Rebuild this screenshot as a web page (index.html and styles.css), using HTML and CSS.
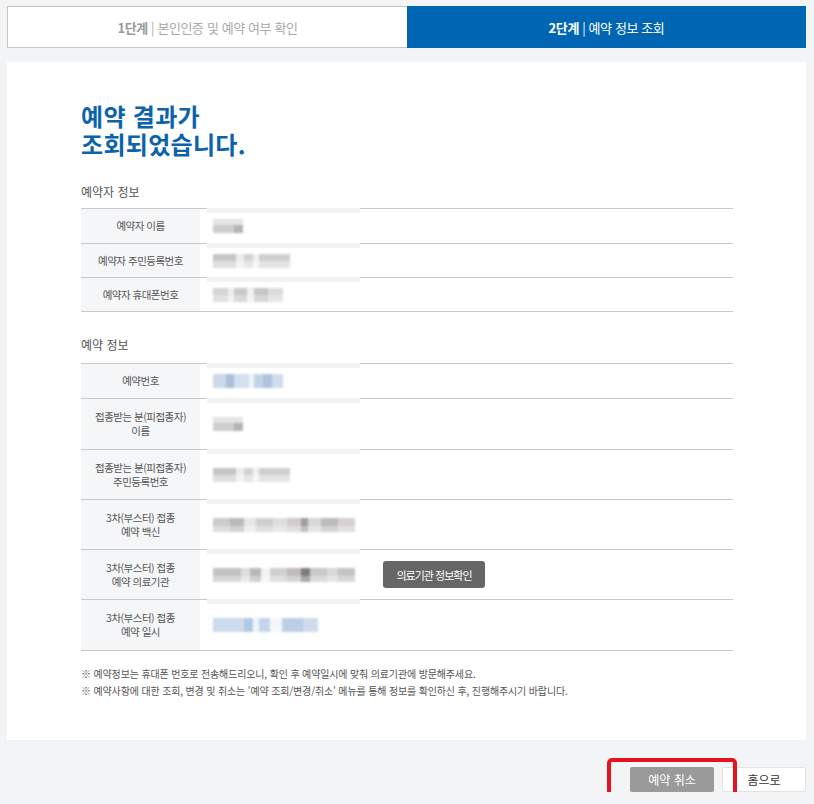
FILE: index.html
```html
<!DOCTYPE html>
<html lang="ko">
<head>
<meta charset="utf-8">
<title>예약 정보 조회</title>
<link rel="stylesheet" href="styles.css">
</head>
<body>
<div class="page">
  <div class="steps">
    <div class="step"><b>1단계</b>&nbsp;|&nbsp;본인인증 및 예약 여부 확인</div>
    <div class="step active"><b>2단계</b>&nbsp;|&nbsp;예약 정보 조회</div>
  </div>

  <div class="card">
    <h1 class="title">예약 결과가<br>조회되었습니다.</h1>

    <h2 class="sec">예약자 정보</h2>
    <div class="grid">
      <div class="row r34">
        <div class="label">예약자 이름</div>
        <div class="value"><span class="blur b-name"></span></div>
      </div>
      <div class="row r33">
        <div class="label">예약자 주민등록번호</div>
        <div class="value"><span class="blur b-rrn"></span></div>
      </div>
      <div class="row r33">
        <div class="label">예약자 휴대폰번호</div>
        <div class="value"><span class="blur b-phone"></span></div>
      </div>
    </div>

    <h2 class="sec sec2">예약 정보</h2>
    <div class="grid">
      <div class="row r34">
        <div class="label">예약번호</div>
        <div class="value"><span class="blur b-resno"></span></div>
      </div>
      <div class="row r50">
        <div class="label">접종받는 분(피접종자)<br>이름</div>
        <div class="value"><span class="blur b-name"></span></div>
      </div>
      <div class="row r49">
        <div class="label">접종받는 분(피접종자)<br>주민등록번호</div>
        <div class="value"><span class="blur b-rrn"></span></div>
      </div>
      <div class="row r49">
        <div class="label">3차(부스터) 접종<br>예약 백신</div>
        <div class="value"><span class="blur b-vac"></span></div>
      </div>
      <div class="row r49">
        <div class="label">3차(부스터) 접종<br>예약 의료기관</div>
        <div class="value"><span class="blur b-hosp"></span><button class="btn-info" type="button">의료기관 정보확인</button></div>
      </div>
      <div class="row r50">
        <div class="label">3차(부스터) 접종<br>예약 일시</div>
        <div class="value"><span class="blur b-date"></span></div>
      </div>
    </div>

    <ul class="notes">
      <li>※ 예약정보는 휴대폰 번호로 전송해드리오니, 확인 후 예약일시에 맞춰 의료기관에 방문해주세요.</li>
      <li>※ 예약사항에 대한 조회, 변경 및 취소는 '예약 조회/변경/취소' 메뉴를 통해 정보를 확인하신 후, 진행해주시기 바랍니다.</li>
    </ul>
  </div>

  <div class="actions">
    <div class="focus"><button class="btn-cancel" type="button">예약 취소</button></div>
    <button class="btn-home" type="button">홈으로</button>
  </div>
</div>
</body>
</html>
```

FILE: styles.css
```css
* { box-sizing: border-box; }

body {
  margin: 0;
  background: #f3f4f6;
  font-family: "Noto Sans CJK KR", "Noto Sans", sans-serif;
  color: #444;
}

.page {
  padding: 6px 8px 0 7px;
}

/* steps */
.steps {
  display: flex;
  height: 42px;
}
.step {
  flex: 1;
  display: flex;
  align-items: center;
  justify-content: center;
  background: #fff;
  border: 1px solid #c6c6c6;
  border-right: none;
  color: #a8a8a8;
  font-size: 13px;
  letter-spacing: -0.4px;
}
.step b { font-weight: 700; color: #999; }
.step.active {
  background: #0066b3;
  border: none;
  color: #fff;
}
.step.active b { color: #fff; }

/* card */
.card {
  margin-top: 14px;
  background: #fff;
  padding: 40px 73px 41px 74px;
}
.title {
  margin: 0;
  font-size: 24px;
  line-height: 28px;
  font-weight: 700;
  color: #0b62ad;
  letter-spacing: 0.3px;
}
.sec {
  margin: 26px 0 8px;
  font-size: 12px;
  line-height: 16px;
  font-weight: 400;
  color: #555;
}
.sec.sec2 { margin: 25px 0 10px; }

/* info grid */
.grid {
  border-top: 1px solid #c8c8c8;
}
.row {
  display: flex;
  border-bottom: 1px solid #c8c8c8;
}
.r34 { height: 35px; }
.r33 { height: 34px; }
.r50 { height: 51px; }
.r49 { height: 50px; }

.label {
  width: 119px;
  flex: none;
  background: #f5f6f8;
  display: flex;
  align-items: center;
  justify-content: center;
  text-align: center;
  font-size: 10.5px;
  line-height: 14px;
  color: #555;
  letter-spacing: -0.5px;
}
.value {
  position: relative;
  flex: 1;
  display: flex;
  align-items: center;
  padding-left: 13px;
}
.value::before {
  content: "";
  position: absolute;
  left: 7px;
  top: -1px;
  width: 153px;
  height: 5px;
  background: #f3f3f3;
}

/* blurred personal data */
.blur {
  display: inline-block;
  height: 14px;
  filter: blur(1.3px);
  flex: none;
}
.b-name {
  width: 30px;
  background:
    linear-gradient(to bottom, #e4e4e4 0 45%, transparent 45%),
    linear-gradient(to right, #cdcdcd 0 70%, #b4b4b4 70%);
}
.b-rrn {
  width: 77px;
  background:
    linear-gradient(to bottom, transparent 0 50%, rgba(255,255,255,0.45) 50%),
    linear-gradient(to right, #c6c6c6 0 30%, #ececec 30% 40%, #d2d2d2 40% 52%, #f1f1f1 52% 60%, #cfcfcf 60% 100%);
}
.b-phone {
  width: 70px;
  background:
    linear-gradient(to bottom, transparent 0 50%, rgba(255,255,255,0.3) 50%),
    linear-gradient(to right, #d4d4d4 0 22%, #ededed 22% 30%, #c9c9c9 30% 48%, #efefef 48% 58%, #c6c6c6 58% 78%, #dcdcdc 78% 100%);
}
.b-resno {
  width: 70px;
  background:
    linear-gradient(to right, #cbd9ea 0 18%, #a9bfdc 18% 30%, #d3dfee 30% 52%, #f0f4f9 52% 58%, #c3d4e9 58% 72%, #aec4df 72% 84%, #d0ddec 84% 100%);
}
.b-vac {
  width: 142px;
  background:
    linear-gradient(to bottom, transparent 0 55%, rgba(255,255,255,0.35) 55%),
    linear-gradient(to right, #cbcbcb 0 12%, #b9b9b9 12% 22%, #e6e6e6 22% 30%, #cfcfcf 30% 42%, #dedede 42% 52%, #d2cccc 52% 62%, #9f9f9f 62% 67%, #d8d8d8 67% 76%, #bcbcbc 76% 88%, #d6d0d0 88% 100%);
}
.b-hosp {
  width: 142px;
  background:
    linear-gradient(to bottom, transparent 0 55%, rgba(255,255,255,0.35) 55%),
    linear-gradient(to right, #c2c2c2 0 20%, #dedede 20% 26%, #b9b9b9 26% 34%, #f2f2f2 34% 40%, #d0d0d0 40% 52%, #c0bbbb 52% 62%, #7c7c7c 62% 68%, #c9c9c9 68% 80%, #d8d8d8 80% 88%, #c4c4c4 88% 100%);
}
.b-date {
  width: 105px;
  background:
    linear-gradient(to right, #ccdbee 0 30%, #b3c8e3 30% 38%, #eef3f9 38% 44%, #c4d5ea 44% 54%, #f5f8fb 54% 66%, #bccfe7 66% 86%, #cddbec 86% 100%);
}

.btn-info {
  margin-left: 28px;
  width: 102px;
  height: 27px;
  border: none;
  border-radius: 3px;
  background: #666;
  color: #fff;
  font-family: inherit;
  font-size: 11px;
  letter-spacing: -1px;
  padding: 0;
}

/* notes */
.notes {
  list-style: none;
  margin: 14px 0 0;
  padding: 0;
  font-size: 10px;
  line-height: 17px;
  color: #555;
  letter-spacing: -0.15px;
}

/* actions */
.actions {
  display: flex;
  justify-content: flex-end;
  align-items: flex-start;
  gap: 8px;
  margin-top: 27px;
}
.focus {
  position: relative;
  height: 25px;
}
.focus::after {
  content: "";
  position: absolute;
  top: -9px;
  bottom: -8px;
  left: -23px;
  right: -23px;
  border: 4px solid #e3141f;
  border-radius: 5px;
  pointer-events: none;
}
.btn-cancel,
.btn-home {
  display: block;
  margin: 0;
  width: 84px;
  height: 25px;
  padding: 0;
  font-family: inherit;
  font-size: 12px;
  border-radius: 2px;
}
.btn-cancel {
  border: none;
  background: #9a9a9a;
  color: #fff;
}
.btn-home {
  border: 1px solid #e2e2e2;
  background: #fff;
  color: #333;
}
```
